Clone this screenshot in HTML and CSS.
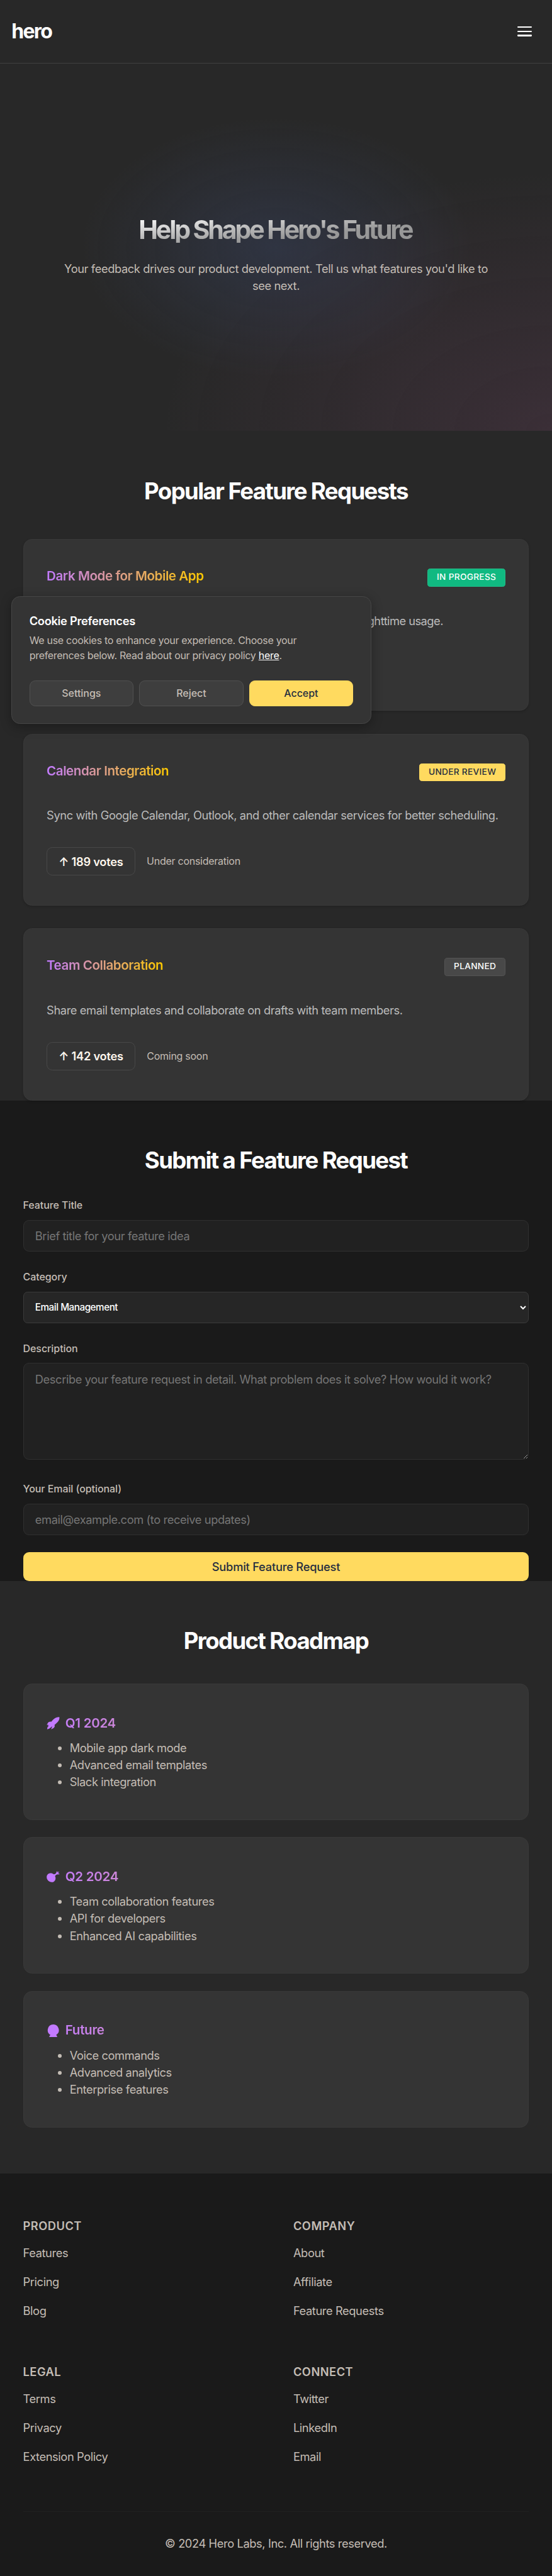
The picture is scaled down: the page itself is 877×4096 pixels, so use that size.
FILE: index.html
```html
<!DOCTYPE html>
<html lang="en">
<head>
<meta charset="utf-8">
<meta name="viewport" content="width=device-width, initial-scale=1">
<title>Hero – Feature Requests</title>
<link rel="stylesheet" href="styles.css">
</head>
<body>
<header class="site-header">
  <a class="logo">hero</a>
  <button class="menu" aria-label="Menu"><span></span><span></span><span></span></button>
</header>

<section class="hero">
  <h1>Help Shape Hero's Future</h1>
  <p>Your feedback drives our product development. Tell us what features you'd like to see next.</p>
</section>

<section class="requests">
  <h2>Popular Feature Requests</h2>
  <div class="request-list">
    <article class="card">
      <div class="card-head"><h3>Dark Mode for Mobile App</h3><span class="badge progress">In Progress</span></div>
      <p class="desc snug">Add dark mode support to mobile app for better viewing and nighttime usage.</p>
    </article>
    <article class="card">
      <div class="card-head"><h3>Calendar Integration</h3><span class="badge review">Under Review</span></div>
      <p class="desc">Sync with Google Calendar, Outlook, and other calendar services for better scheduling.</p>
      <div class="card-foot"><button class="votes">↑ 189 votes</button><span>Under consideration</span></div>
    </article>
    <article class="card">
      <div class="card-head"><h3>Team Collaboration</h3><span class="badge planned">Planned</span></div>
      <p class="desc">Share email templates and collaborate on drafts with team members.</p>
      <div class="card-foot"><button class="votes">↑ 142 votes</button><span>Coming soon</span></div>
    </article>
  </div>
</section>

<section class="submit">
  <h2>Submit a Feature Request</h2>
  <form>
    <div class="field"><label for="t">Feature Title</label><input id="t" type="text" placeholder="Brief title for your feature idea"></div>
    <div class="field"><label for="c">Category</label><select id="c"><option>Email Management</option></select></div>
    <div class="field tall"><label for="d">Description</label><textarea id="d" placeholder="Describe your feature request in detail. What problem does it solve? How would it work?"></textarea></div>
    <div class="field"><label for="e">Your Email (optional)</label><input id="e" type="email" placeholder="email@example.com (to receive updates)"></div>
    <button class="send" type="button">Submit Feature Request</button>
  </form>
</section>

<section class="roadmap">
  <h2>Product Roadmap</h2>
  <div class="road-list">
    <article class="card">
      <h3><svg viewBox="0 0 36 36"><path d="M35.6.5C31 0 23 2 17.500 8.500L13 13.500C9 12.500 6 14 4 16L.4 22.500L5 21.500L3 24L6.500 24L2.500 29L1.500 34.500L7 33L10 30.500L16 26L12.500 34.500L19.500 31C22.500 29 23.500 25.500 22 22.500L27 18C34 12 36.500 6 35.600.5Z"/></svg><span>Q1 2024</span></h3>
      <ul><li>Mobile app dark mode</li><li>Advanced email templates</li><li>Slack integration</li></ul>
    </article>
    <article class="card">
      <h3><svg viewBox="0 0 36 36"><path d="M28.500 2.500L30 2.500L30.300 5.500L34.500 3L34.800 4L32 8L36 9.500L35.500 11L29 11.500C26.500 12.500 25 14 23.500 16C27.500 23 23.500 32.500 14.500 33C6.500 33 .3 26 .3 19C.3 11.500 6 8 11 8C15 8 17.500 9 20 11C22.500 11 25.500 9.500 26.500 7.500Z"/></svg><span>Q2 2024</span></h3>
      <ul><li>Team collaboration features</li><li>API for developers</li><li>Enhanced AI capabilities</li></ul>
    </article>
    <article class="card">
      <h3><svg viewBox="0 0 36 36"><path d="M18.200 0A15.500 15.700 0 0 1 26.800 29L29.500 33.500Q29.800 35 28 35.200Q18.500 36.200 9 35.200Q7 35 7.500 33.500L10.500 29A15.500 15.700 0 0 1 18.200 0Z"/></svg><span>Future</span></h3>
      <ul><li>Voice commands</li><li>Advanced analytics</li><li>Enterprise features</li></ul>
    </article>
  </div>
</section>

<footer class="site-footer">
  <div class="links">
    <nav><h4>Product</h4><a>Features</a><a>Pricing</a><a>Blog</a></nav>
    <nav><h4>Company</h4><a>About</a><a>Affiliate</a><a>Feature Requests</a></nav>
    <nav><h4>Legal</h4><a>Terms</a><a>Privacy</a><a>Extension Policy</a></nav>
    <nav><h4>Connect</h4><a>Twitter</a><a>LinkedIn</a><a>Email</a></nav>
  </div>
  <p class="copyright">© 2024 Hero Labs, Inc. All rights reserved.</p>
</footer>

<aside class="cookie">
  <h5>Cookie Preferences</h5>
  <p>We use cookies to enhance your experience. Choose your preferences below. Read about our privacy policy <a>here</a>.</p>
  <div class="cookie-actions"><button>Settings</button><button>Reject</button><button class="accept">Accept</button></div>
</aside>
</body>
</html>
```
FILE: styles.css
```css
* { box-sizing: border-box; margin: 0; padding: 0; }

/* 1rem stands for ten design pixels */
html { font-size: 11.425px; background: #1a1a1a; }

body {
  position: relative;
  background: #1a1a1a;
  color: #c4bdb5;
  font: 400 1.6rem/2.4rem Inter, "Liberation Sans", sans-serif;
  letter-spacing: -0.0218em;
  overflow-x: hidden;
}

button, input, textarea, select { font-family: inherit; letter-spacing: inherit; }

h2 {
  padding-top: 0.1rem;
  color: #fff;
  font-size: 3.2rem;
  font-weight: 650;
  line-height: 3.74rem;
  letter-spacing: -0.044em;
  text-align: center;
}

/* Header */
.site-header {
  display: flex;
  justify-content: space-between;
  align-items: center;
  height: 8.8rem;
  padding: 0 2.8rem 0 1.6rem;
  background: #282828;
  border-bottom: 1px solid #414141;
}
.logo { color: #fff; font-size: 2.8rem; font-weight: 700; letter-spacing: -0.055em; line-height: 1; }
.menu { display: flex; flex-direction: column; gap: 0.4rem; width: 2rem; background: none; border: 0; }
.menu span { height: 0.2rem; border-radius: 0.1rem; background: #fff; }

/* Hero */
.hero {
  height: 51.2rem;
  padding-top: 21.4rem;
  text-align: center;
  background:
    radial-gradient(ellipse at 50% 50%, rgba(85, 115, 200, 0.16), transparent 50%),
    radial-gradient(ellipse at 100% 100%, rgba(165, 85, 140, 0.15), transparent 50%),
    #282828;
}
.hero h1 {
  width: fit-content;
  margin: 0 auto 2.4rem;
  font-size: 3.6rem;
  font-weight: 650;
  line-height: 1;
  letter-spacing: -0.0765em;
  padding-right: 0.06em;
  color: transparent;
  background: linear-gradient(to bottom right, #fff, #bcbcbc 40%, #999 65%, #959595);
  background-clip: text;
}
.hero p { width: 60rem; margin: 0 auto; }

/* Cards */
.card {
  padding: 4rem 3.2rem;
  background: #343434;
  border: 1px solid #393939;
  border-radius: 1.2rem;
}
.card h3 {
  font-size: 1.8rem;
  font-weight: 600;
  letter-spacing: -0.021em;
  color: transparent;
  background: linear-gradient(90deg, #c27aff, #fcc800);
  background-clip: text;
}
.requests { padding: 6.4rem 3.2rem 0; background: #282828; }
.request-list { display: grid; grid-template-columns: minmax(0, 1fr); gap: 3.2rem; margin-top: 4.8rem; }
.request-list .card { height: 23.9rem; box-shadow: 0 0.1rem 0.3rem rgba(0, 0, 0, 0.15); }
.request-list h3 { line-height: 2.16rem; }
.card-head { display: flex; justify-content: space-between; align-items: flex-start; height: 2.5rem; margin-bottom: 3.6rem; }
.badge {
  height: 2.5rem;
  padding: 0 1.2rem;
  border: 1px solid;
  border-radius: 0.4rem;
  font-size: 1.2rem;
  font-weight: 500;
  line-height: 2.2rem;
  letter-spacing: 0.021em;
  text-transform: uppercase;
  color: #fff;
}
.progress { background: #10b981; border-color: #22bc88; }
.review { background: #ffda5f; border-color: #ffda5f; color: #262e40; }
.planned { background: #484848; border-color: #545454; }
.desc { color: #bcbcbc; margin-bottom: 3.2rem; white-space: nowrap; }
.desc.snug { letter-spacing: -0.0285em; }
.card-foot { display: flex; align-items: center; gap: 1.6rem; font-size: 1.4rem; letter-spacing: -0.016em; }
.votes {
  height: 3.96rem;
  padding: 0 1.6rem;
  background: transparent;
  border: 1px solid #484848;
  border-radius: 0.8rem;
  color: #fff7ed;
  font-size: 1.6rem;
  font-weight: 600;
}

/* Submit form */
.submit { padding: 6.4rem 3.2rem 0; background: #1a1a1a; }
.submit form { margin-top: 3.2rem; }
.field { display: flex; flex-direction: column; gap: 0.8rem; margin-bottom: 2.4rem; }
.field.tall { margin-bottom: 2.95rem; }
label { font-size: 1.4rem; font-weight: 500; letter-spacing: -0.004em; }
input, textarea, select {
  width: 100%;
  height: 4.4rem;
  padding: 0 1.6rem;
  background: #212121;
  border: 1px solid #303030;
  border-radius: 0.8rem;
  color: #fff;
  font-size: 1.6rem;
}
select {
  height: 4.35rem;
  padding: 0 0 0 1.25rem;
  background: #262626;
  border-color: #3b3b3b;
  border-radius: 0.6rem;
  font-size: 1.333rem;
  font-weight: 500;
  letter-spacing: -0.03em;
}
textarea { height: 13.4rem; padding: 1.1rem 1.6rem; line-height: 2.2rem; resize: vertical; }
::placeholder { color: #757575; }
.send {
  display: block;
  width: 100%;
  height: 4rem;
  background: #ffda5f;
  border: 0;
  border-radius: 0.8rem;
  color: #262e40;
  font-size: 1.6rem;
  font-weight: 500;
  letter-spacing: -0.012em;
}

/* Roadmap */
.roadmap { padding: 6.4rem 3.2rem; background: #282828; }
.road-list { display: grid; gap: 2.4rem; margin-top: 4rem; }
.road-list .card { height: 19rem; }
.road-list h3 { display: flex; align-items: center; gap: 0.8rem; line-height: 2.88rem; margin-bottom: 0.8rem; letter-spacing: -0.0145em; }
.road-list svg { width: 1.8rem; height: 1.8rem; fill: #c27aff; }
.road-list ul { padding-left: 3.2rem; }

/* Footer */
.site-footer { padding: 6.4rem 3.2rem 3.2rem; background: #1a1a1a; }
.links { display: grid; grid-template-columns: 1fr 1fr; gap: 6.4rem 4.8rem; }
.links nav { display: flex; flex-direction: column; gap: 1.6rem; }
.links h4 { font-size: 1.6rem; font-weight: 600; line-height: 1.92rem; letter-spacing: 0.027em; text-transform: uppercase; }
.copyright { margin-top: 6.4rem; padding-top: 3.2rem; border-top: 1px solid #202020; text-align: center; }

/* Cookie dialog, floats over the page */
.cookie {
  position: absolute;
  top: 83rem;
  left: 1.6rem;
  width: 50rem;
  height: 17.75rem;
  padding: 2.4rem;
  background: #343434;
  border: 1px solid #464646;
  border-radius: 1.2rem;
  box-shadow: 0 0.4rem 1.6rem rgba(0, 0, 0, 0.3);
  font-size: 1.4rem;
  line-height: 2.1rem;
  letter-spacing: -0.018em;
}
.cookie h5 { margin-bottom: 0.7rem; color: #fff; font-size: 1.6rem; font-weight: 600; line-height: 1.92rem; }
.cookie p a { color: #fff; text-decoration: underline; }
.cookie-actions { display: flex; gap: 0.8rem; margin-top: 2.4rem; }
.cookie-actions button {
  flex: 1;
  height: 3.56rem;
  background: #3e3e3e;
  border: 1px solid #505050;
  border-radius: 0.8rem;
  color: #c4bdb5;
  font-size: 1.4rem;
  font-weight: 500;
  letter-spacing: -0.002em;
}
.cookie-actions .accept { background: #ffda5f; border-color: #ffda5f; color: #262e40; }
```
